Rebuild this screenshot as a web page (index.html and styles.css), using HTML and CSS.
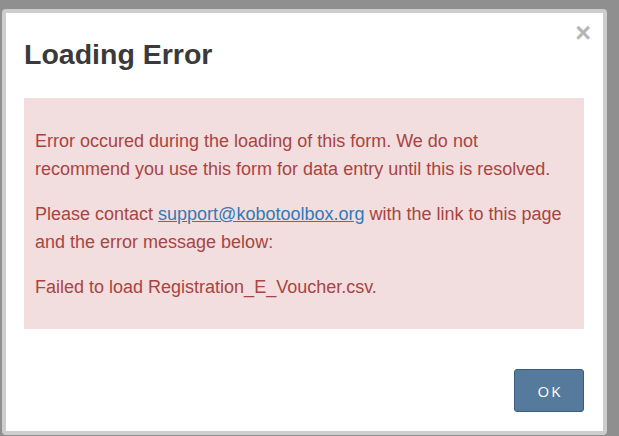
FILE: index.html
```html
<!DOCTYPE html>
<html>
<head>
<meta charset="utf-8">
<link rel="stylesheet" href="styles.css">
</head>
<body>
<div class="dialog">
  <button class="close" aria-label="Close">×</button>
  <h2 class="title">Loading Error</h2>
  <div class="alert">
    <p>Error occured during the loading of this form. We do not recommend you use this form for data entry until this is resolved.</p>
    <p>Please contact <a href="#">support@kobotoolbox.org</a> with the link to this page and the error message below:</p>
    <p>Failed to load Registration_E_Voucher.csv.</p>
  </div>
  <div class="footer">
    <button class="ok">OK</button>
  </div>
</div>
</body>
</html>
```
FILE: styles.css
```css
html, body {
  margin: 0;
  padding: 0;
  height: 100%;
}
body {
  background: #8f8f8f;
  font-family: "Liberation Sans", Arial, sans-serif;
  padding: 9px 12px 0 2px;
  box-sizing: border-box;
}
.dialog {
  position: relative;
  background: #fff;
  border: 4px solid #cdcdcd;
  border-radius: 4px;
  height: 426px;
  box-sizing: border-box;
  padding: 0 19px 0 18px;
}
.close {
  position: absolute;
  top: 7px;
  right: 12px;
  background: none;
  border: 0;
  padding: 0;
  font-family: "Liberation Sans", Arial, sans-serif;
  font-size: 27px;
  font-weight: bold;
  line-height: 27px;
  color: #b5b5b5;
}
.title {
  margin: 0;
  padding-top: 25px;
  font-size: 28.5px;
  line-height: 32px;
  font-weight: bold;
  color: #3a3a3a;
}
.alert {
  margin-top: 28px;
  background: #f2dede;
  color: #a94442;
  padding: 29px 11px 28px 11px;
  font-size: 18px;
  line-height: 28px;
}
.alert p {
  margin: 0 0 17px 0;
}
.alert p:last-child {
  margin-bottom: 0;
}
.alert a {
  color: #337ab7;
  text-decoration: underline;
}
.footer {
  display: flex;
  justify-content: flex-end;
  margin-top: 40px;
}
.ok {
  width: 70px;
  height: 43px;
  background: #557a9b;
  border: 1px solid #3a5d7e;
  border-radius: 3px;
  color: #fff;
  font-family: "Open Sans", sans-serif;
  font-size: 15px;
  letter-spacing: 2px;
  padding: 0 0 0 2px;
}
```
